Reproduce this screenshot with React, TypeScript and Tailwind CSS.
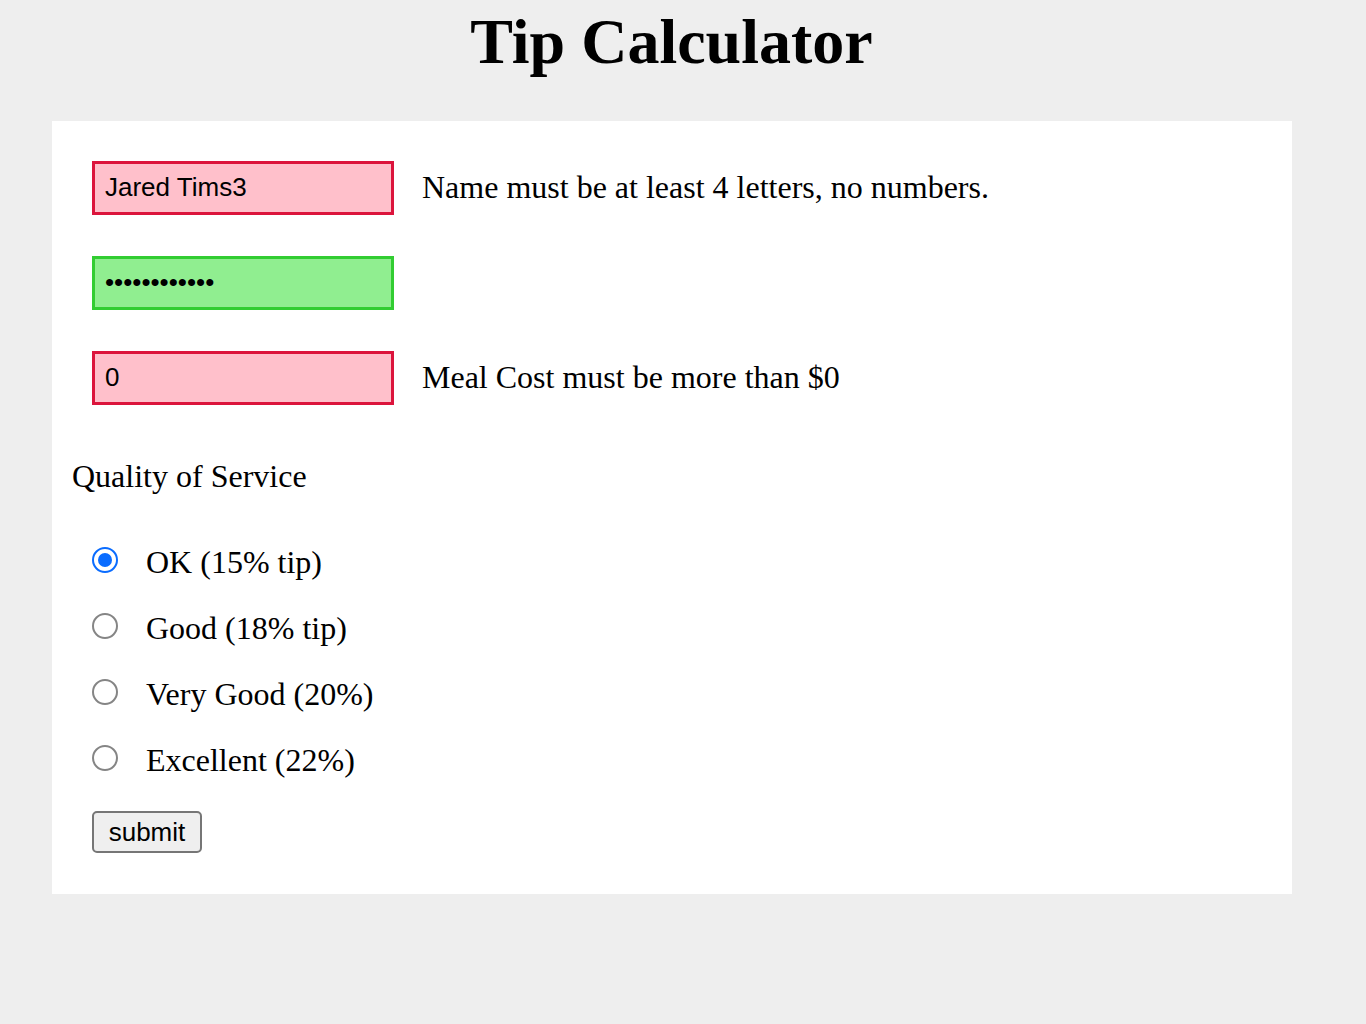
import { useState } from 'react'

const serif = 'font-["Liberation_Serif","Times_New_Roman",serif]'
const sans = 'font-["Liberation_Sans",Arial,sans-serif]'

const tips = [
  { id: 'ok', label: 'OK (15% tip)' },
  { id: 'good', label: 'Good (18% tip)' },
  { id: 'verygood', label: 'Very Good (20%)' },
  { id: 'excellent', label: 'Excellent (22%)' },
]

export default function App() {
  const [name, setName] = useState('Jared Tims3')
  const [password, setPassword] = useState('abcdefghijkl')
  const [cost, setCost] = useState('0')
  const [quality, setQuality] = useState('ok')

  return (
    <div className={`min-h-screen bg-[#eeeeee] text-black ${serif}`}>
      <h1 className="pt-[5px] pr-[23px] mb-[42px] text-center text-[64px] font-bold leading-[1.15]">
        Tip Calculator
      </h1>

      <form
        className="ml-[52px] w-[1240px] bg-white px-[40px] pt-[40px] pb-[41px]"
        onSubmit={(e) => e.preventDefault()}
      >
        {/* Inputs */}
        <div className="flex flex-col gap-[41px]">
          <div className="flex items-center gap-[28px]">
            <input
              value={name}
              onChange={(e) => setName(e.target.value)}
              className={`h-[54px] w-[302px] border-[3px] border-[#dc143c] bg-[#ffc0cb] pl-[10px] text-[26px] outline-none ${sans}`}
            />
            <span className="text-[32px] leading-[1.15]">Name must be at least 4 letters, no numbers.</span>
          </div>
          <div className="flex items-center gap-[28px]">
            <input
              type="password"
              value={password}
              onChange={(e) => setPassword(e.target.value)}
              className={`h-[54px] w-[302px] border-[3px] border-[#32cd32] bg-[#90ee90] pl-[10px] text-[26px] outline-none ${sans}`}
            />
          </div>
          <div className="flex items-center gap-[28px]">
            <input
              value={cost}
              onChange={(e) => setCost(e.target.value)}
              className={`h-[54px] w-[302px] border-[3px] border-[#dc143c] bg-[#ffc0cb] pl-[10px] text-[26px] outline-none ${sans}`}
            />
            <span className="text-[32px] leading-[1.15]">Meal Cost must be more than $0</span>
          </div>
        </div>

        <p className="-ml-[20px] mt-[53px] text-[32px] leading-[1.15]">Quality of Service</p>

        {/* Radios */}
        <div className="mt-[50px] flex flex-col gap-[29px]">
          {tips.map((t) => {
            const checked = quality === t.id
            return (
              <label
                key={t.id}
                className="flex cursor-pointer items-center gap-[28px]"
                onClick={() => setQuality(t.id)}
              >
                <span
                  className={`mb-[5px] flex h-[26px] w-[26px] items-center justify-center rounded-full border-[2px] bg-white ${
                    checked ? 'border-[#0a6cff]' : 'border-[#858585]'
                  }`}
                >
                  {checked && <span className="h-[14px] w-[14px] rounded-full bg-[#0a6cff]" />}
                </span>
                <span className="text-[32px] leading-[1.15]">{t.label}</span>
              </label>
            )
          })}
        </div>

        <button
          type="submit"
          className={`mt-[32px] h-[42px] w-[110px] rounded-[5px] border-[2px] border-[#767676] bg-[#efefef] text-[26px] leading-none ${sans}`}
        >
          submit
        </button>
      </form>
    </div>
  )
}
